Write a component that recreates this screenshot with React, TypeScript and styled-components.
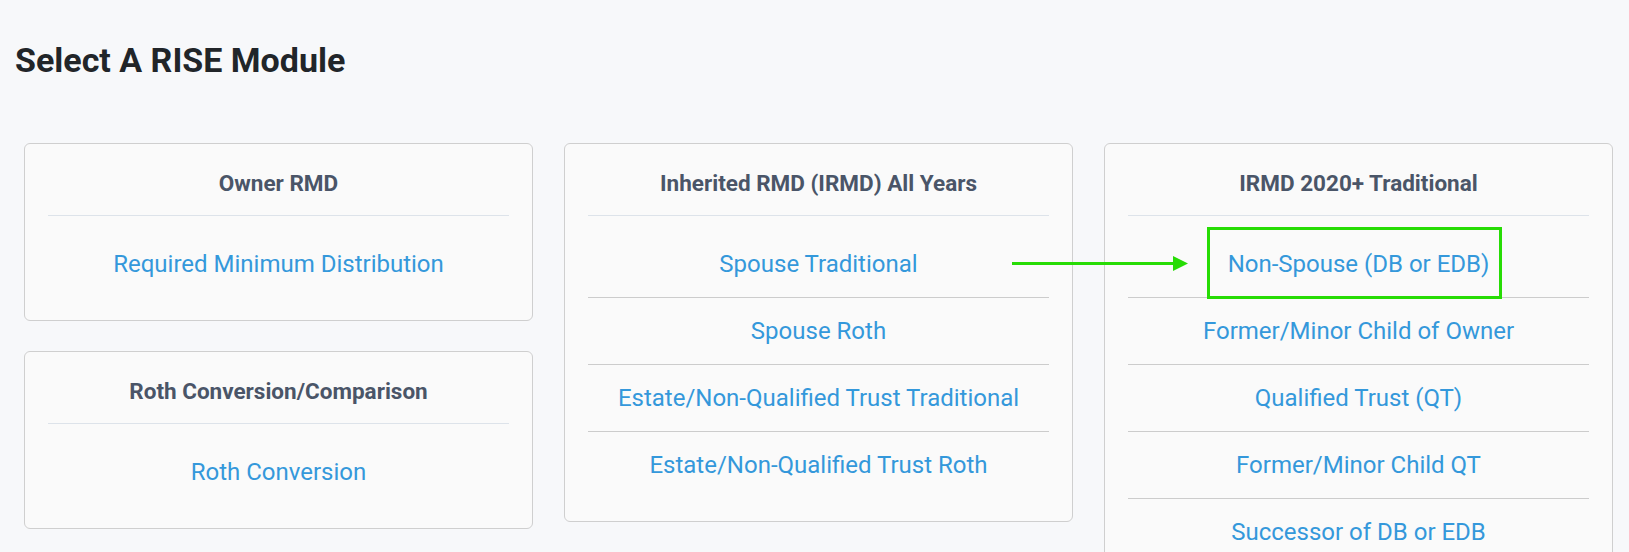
import { FC } from 'react'
import styled, { createGlobalStyle } from 'styled-components'

type Module = {
	title: string
	links: string[]
}

const COLUMNS: Module[][] = [
	[
		{ title: 'Owner RMD', links: ['Required Minimum Distribution'] },
		{ title: 'Roth Conversion/Comparison', links: ['Roth Conversion'] },
	],
	[
		{
			title: 'Inherited RMD (IRMD) All Years',
			links: [
				'Spouse Traditional',
				'Spouse Roth',
				'Estate/Non-Qualified Trust Traditional',
				'Estate/Non-Qualified Trust Roth',
			],
		},
	],
	[
		{
			title: 'IRMD 2020+ Traditional',
			links: [
				'Non-Spouse (DB or EDB)',
				'Former/Minor Child of Owner',
				'Qualified Trust (QT)',
				'Former/Minor Child QT',
				'Successor of DB or EDB',
			],
		},
	],
]

const ModuleCard: FC<{ module: Module }> = ({ module }) => (
	<Card>
		<CardHeader>{module.title}</CardHeader>
		<LinkList>
			{module.links.map((link) => (
				<LinkItem key={link}>
					<ModuleLink href="#">{link}</ModuleLink>
				</LinkItem>
			))}
		</LinkList>
	</Card>
)

const App: FC = () => {
	return (
		<>
			<GlobalStyle />
			<Page>
				<Heading>Select A RISE Module</Heading>
				<Grid>
					{COLUMNS.map((col, i) => (
						<Column key={i}>
							{col.map((m) => (
								<ModuleCard key={m.title} module={m} />
							))}
						</Column>
					))}
				</Grid>
				{/* annotation drawn over the screenshot */}
				<HighlightBox />
				<Arrow width="178" height="17" viewBox="0 0 178 17">
					<line x1="0" y1="8.5" x2="164" y2="8.5" stroke="#27dc05" strokeWidth="3" />
					<polygon points="161,1 176,8.5 161,16" fill="#27dc05" />
				</Arrow>
			</Page>
		</>
	)
}

const GlobalStyle = createGlobalStyle`
	html, body {
		margin: 0;
		padding: 0;
		background: #f7f8fa;
	}
	body {
		font-family: Roboto, 'Liberation Sans', Arial, sans-serif;
		overflow: hidden;
	}
`

const Page = styled.div`
	position: relative;
	height: 552px;
	padding: 40px 16px 0 24px;
	box-sizing: border-box;
`

const Heading = styled.h1`
	margin: 0 0 63px -9px;
	font-size: 34px;
	font-weight: 700;
	line-height: normal;
	color: #212529;
`

const Grid = styled.div`
	display: grid;
	grid-template-columns: repeat(3, 509px);
	column-gap: 31px;
	align-items: start;
`

const Column = styled.div`
	display: flex;
	flex-direction: column;
	gap: 30px;
`

const Card = styled.div`
	background: #fafafa;
	border: 1px solid #cfcfcf;
	border-radius: 6px;
	padding: 0 23px 23px;
`

const CardHeader = styled.div`
	padding: 26px 0 18px;
	border-bottom: 1px solid #dde3ea;
	text-align: center;
	font-size: 22.5px;
	font-weight: 700;
	line-height: 27px;
	color: #4a5568;
`

const LinkList = styled.div`
	display: flex;
	flex-direction: column;
	padding-top: 15px;
`

const LinkItem = styled.div`
	display: flex;
	align-items: center;
	justify-content: center;
	height: 66px;
	border-bottom: 1px solid #cccccc;
	&:last-child {
		border-bottom: none;
	}
`

const ModuleLink = styled.a`
	font-size: 24px;
	color: #3498db;
	text-decoration: none;
`

const HighlightBox = styled.div`
	position: absolute;
	left: 1207px;
	top: 227px;
	width: 295px;
	height: 72px;
	border: 3px solid #27dc05;
	box-sizing: border-box;
`

const Arrow = styled.svg`
	position: absolute;
	left: 1012px;
	top: 255px;
`

export default App
